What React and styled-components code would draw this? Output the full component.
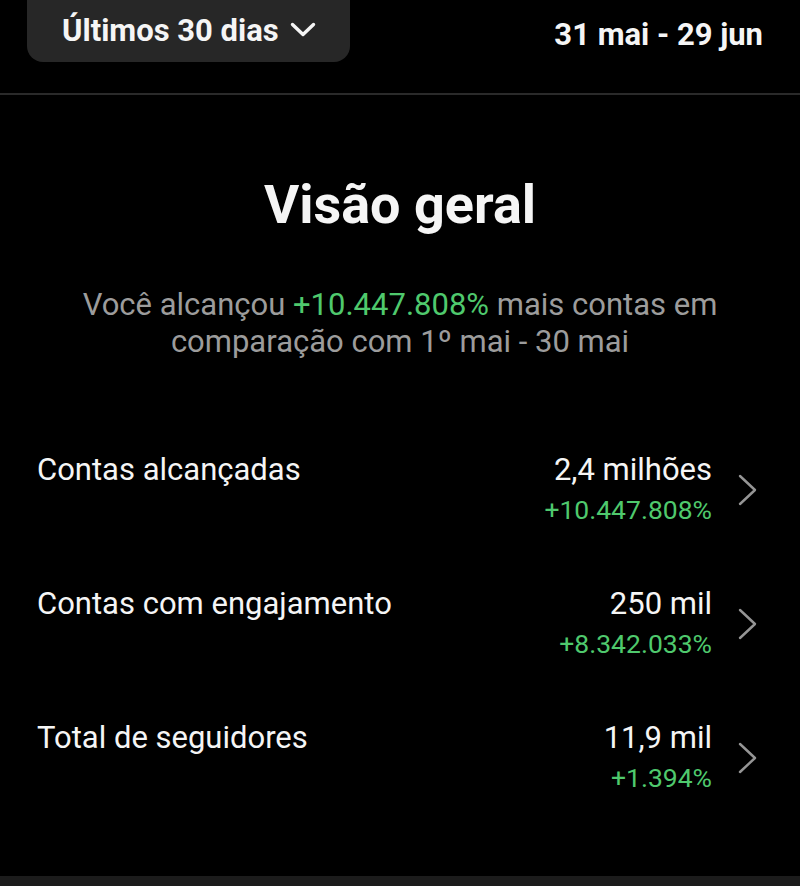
import React from "react";
import styled, { createGlobalStyle } from "styled-components";

const GlobalStyle = createGlobalStyle`
  body {
    margin: 0;
    background: #000;
    font-family: Roboto, "Liberation Sans", sans-serif;
  }
`;

const Page = styled.div`
  width: 800px;
  height: 886px;
  background: #000;
  display: flex;
  flex-direction: column;
  overflow: hidden;
  color: #f5f5f5;
`;

const TopBar = styled.div`
  height: 93px;
  display: flex;
  align-items: flex-start;
  justify-content: space-between;
  padding: 0 37px 0 27px;
  border-bottom: 2px solid #2a2a2a;
`;

const RangeButton = styled.button`
  margin-top: -20px;
  height: 82px;
  width: 323px;
  border: none;
  border-radius: 16px;
  background: #272727;
  color: #f5f5f5;
  font-family: inherit;
  font-size: 31px;
  font-weight: 700;
  display: flex;
  align-items: center;
  gap: 11px;
  padding: 18px 0 0 35px;
`;

const DateRange = styled.div`
  font-size: 31px;
  font-weight: 700;
  line-height: 36px;
  margin-top: 17px;
`;

const Overview = styled.div`
  display: flex;
  flex-direction: column;
  align-items: center;
  padding-top: 78px;
`;

const Title = styled.h1`
  margin: 0;
  font-size: 54px;
  font-weight: 700;
  line-height: 64px;
`;

const Summary = styled.p`
  margin: 49px 0 0;
  font-size: 31px;
  line-height: 37px;
  color: #9c9c9c;
  text-align: center;
`;

const Highlight = styled.span`
  color: #4fc96d;
`;

const Metrics = styled.div`
  display: flex;
  flex-direction: column;
  gap: 54px;
  padding: 90px 43px 0 37px;
`;

const Row = styled.div`
  display: flex;
  align-items: center;
`;

const Label = styled.div`
  flex: 1;
  font-size: 31px;
  align-self: flex-start;
  line-height: 40px;
`;

const Values = styled.div`
  display: flex;
  flex-direction: column;
  align-items: flex-end;
  margin-right: 26px;
`;

const Value = styled.div`
  font-size: 31px;
  line-height: 40px;
`;

const Change = styled.div`
  font-size: 26.5px;
  line-height: 40px;
  color: #4fc96d;
`;

const BottomBar = styled.div`
  margin-top: auto;
  height: 10px;
  background: #1c1c1c;
`;

const Caret = () => (
  <svg width="26" height="16" viewBox="0 0 26 16" fill="none">
    <path d="M2.5 2.5l10.5 10 10.5-10" stroke="#f5f5f5" strokeWidth="3.4" strokeLinecap="round" strokeLinejoin="round" />
  </svg>
);

const Chevron = () => (
  <svg width="19" height="32" viewBox="0 0 19 32" fill="none">
    <path d="M2 2l15 14L2 30" stroke="#959595" strokeWidth="2.4" strokeLinecap="round" strokeLinejoin="round" />
  </svg>
);

const metrics = [
  { label: "Contas alcançadas", value: "2,4 milhões", change: "+10.447.808%" },
  { label: "Contas com engajamento", value: "250 mil", change: "+8.342.033%" },
  { label: "Total de seguidores", value: "11,9 mil", change: "+1.394%" },
];

export default function App() {
  return (
    <Page>
      <GlobalStyle />
      <TopBar>
        <RangeButton>
          Últimos 30 dias <Caret />
        </RangeButton>
        <DateRange>31 mai - 29 jun</DateRange>
      </TopBar>
      <Overview>
        <Title>Visão geral</Title>
        <Summary>
          Você alcançou <Highlight>+10.447.808%</Highlight> mais contas em
          <br />
          comparação com 1º mai - 30 mai
        </Summary>
      </Overview>
      <Metrics>
        {metrics.map((m) => (
          <Row key={m.label}>
            <Label>{m.label}</Label>
            <Values>
              <Value>{m.value}</Value>
              <Change>{m.change}</Change>
            </Values>
            <Chevron />
          </Row>
        ))}
      </Metrics>
      <BottomBar />
    </Page>
  );
}
